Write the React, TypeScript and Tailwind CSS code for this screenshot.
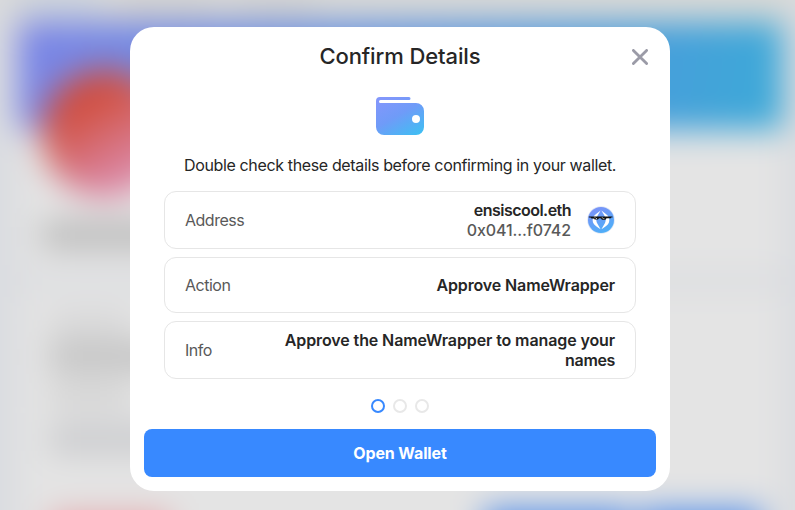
import type { ReactNode } from "react";

function ProfilePage() {
  return (
    <div
      aria-hidden="true"
      className="absolute -inset-12 flex flex-col bg-[#dadce0] p-12 blur-[16px]"
    >
      <div className="-mt-12 flex h-[70px] shrink-0 items-end gap-5 bg-[#d9d9d7] px-5 pb-[13px]">
        <div className="h-2 w-20 bg-[#a9c3ea]" />
        <div className="h-2 w-24 bg-[#c3c1c1]" />
        <div className="h-2 w-20 bg-[#c3c1c1]" />
      </div>
      <div className="ml-[18px] mr-[12px] h-[251px] shrink-0 bg-[#e4e4e4]">
        <div className="h-[108px] bg-linear-[100deg,#7b85e6_0%,#6b8ee0_35%,#4b9bdb_75%,#3caad8_100%]" />
        <div className="-mt-[60px] ml-[24px] size-[128px] rounded-full bg-linear-[150deg,#d04838_20%,#d2574c_35%,#d98099_70%,#e3a2c4_100%]" />
        <div className="mt-[25px] ml-6 h-6 w-44 bg-[#b5b5b5]" />
      </div>
      <div className="ml-[18px] mr-[12px] mt-4 flex h-[340px] shrink-0 flex-col bg-[#e4e4e4] pl-8">
        <div className="mt-7 h-4 w-20 bg-[#cfcfd0]" />
        <div className="mt-3 h-6 w-52 bg-[#bcbcbc]" />
        <div className="mt-4 h-5 w-20 bg-[#cfcfcf]" />
        <div className="mt-5 h-7 w-52 bg-[#c9cacd]" />
        <div className="mt-[57px] flex shrink-0 items-start">
          <div className="mt-1 h-24 w-[120px] shrink-0 bg-[#e5a9ac]" />
          <div className="ml-[314px] h-24 w-[148px] shrink-0 bg-[#4f8be8]" />
          <div className="ml-2 h-24 w-[122px] shrink-0 bg-[#4f8be8]" />
        </div>
      </div>
    </div>
  );
}

function CloseIcon() {
  return (
    <svg viewBox="0 0 16 16" className="size-4" fill="none" stroke="#9b9ba7" strokeWidth="2.8" strokeLinecap="round">
      <path d="M1.4 1.4 14.6 14.6M14.6 1.4 1.4 14.6" />
    </svg>
  );
}

function WalletIcon() {
  return (
    <svg viewBox="0 0 48 38" className="h-[38px] w-12">
      <defs>
        <linearGradient id="wallet" x1="10" y1="0" x2="34" y2="42" gradientUnits="userSpaceOnUse">
          <stop stopColor="#8297fb" />
          <stop offset="0.45" stopColor="#6f9bf8" />
          <stop offset="1" stopColor="#41bdf3" />
        </linearGradient>
      </defs>
      <path
        fill="url(#wallet)"
        fillRule="evenodd"
        d="M4 0H33a1.5 1.5 0 0 1 0 3H4.5a1.5 1.5 0 0 0 0 3H40a8 8 0 0 1 8 8V30a8 8 0 0 1-8 8H8a8 8 0 0 1-8-8V4a4 4 0 0 1 4-4ZM40 18a4 4 0 1 0 0 8a4 4 0 0 0 0-8Z"
      />
    </svg>
  );
}

function Avatar() {
  return (
    <svg viewBox="0 0 28 28" className="size-7">
      <defs>
        <linearGradient id="avatar" x1="8" y1="1" x2="20" y2="27" gradientUnits="userSpaceOnUse">
          <stop stopColor="#7b91f8" />
          <stop offset="1" stopColor="#4bb0f8" />
        </linearGradient>
      </defs>
      <circle cx="14" cy="14" r="13.8" fill="#dfe7f5" />
      <circle cx="14" cy="14" r="13" fill="url(#avatar)" />
      <path
        fill="#fff"
        d="M13.6 4.6C12 7.5 10.6 9.5 9.6 11.5C9.1 13.5 9.3 15.5 10 17L13.6 23.2C10.8 21.4 8.6 20 7 18.2C5.1 15.8 5.2 12.4 7.2 9.8C8.8 8.1 11 6.5 13.6 4.6ZM14.4 4.6C16 7.5 17.4 9.5 18.4 11.5C18.9 13.5 18.7 15.5 18 17L14.4 23.2C17.2 21.4 19.4 20 21 18.2C22.9 15.8 22.8 12.4 20.8 9.8C19.2 8.1 17 6.5 14.4 4.6Z"
      />
      <path
        fill="#111"
        d="M1.8 10.5H25.5V11.6H24V12.2H19.5L18.5 13.8H15L13.6 12.2H12L11 13.6H7.8L6.5 12.5H4.5L3.5 11.6H1.8Z"
      />
      <path fill="#fff" d="M7.5 11.5h1v.8h-1zM9 12.2h1v.7H9zM14.8 11.5h1v.8h-1zM16.3 12.2h1v.7h-1z" />
    </svg>
  );
}

function DetailRow({ label, size, children }: { label: string; size: string; children: ReactNode }) {
  return (
    <div className={`flex items-center justify-between rounded-xl border border-[#e6e6e6] px-5 ${size}`}>
      <span className="tracking-[-0.5px] text-[#595959]">{label}</span>
      <div className="flex items-center gap-4 text-right font-semibold text-[#262626]">{children}</div>
    </div>
  );
}

export default function App() {
  return (
    <div className="relative flex h-[510px] w-[795px] justify-center overflow-hidden font-['Inter','Liberation_Sans',sans-serif] text-base leading-5">
      <ProfilePage />
      <div
        role="dialog"
        className="relative mt-[27px] ml-[5px] flex h-[464px] w-[540px] flex-col rounded-3xl bg-white px-3.5"
      >
        <header className="flex h-[60px] items-center justify-between px-2">
          <span className="w-4" />
          <h1 className="pb-0.5 text-[22px] font-medium tracking-[-0.1px] text-[#262626]">Confirm Details</h1>
          <button aria-label="Close">
            <CloseIcon />
          </button>
        </header>
        <div className="mt-2.5 flex justify-center">
          <WalletIcon />
        </div>
        <p className="mt-5 text-center tracking-[-0.36px] whitespace-nowrap text-[#262626]">
          Double check these details before confirming in your wallet.
        </p>
        <div className="mt-4 flex flex-col gap-2 px-5">
          <DetailRow size="h-[58px]" label="Address">
            <div>
              <div className="tracking-[-0.53px]">ensiscool.eth</div>
              <div className="font-medium tracking-[-0.1px] text-[#595959]">0x041...f0742</div>
            </div>
            <Avatar />
          </DetailRow>
          <DetailRow size="h-14" label="Action">
            <span className="tracking-[-0.13px]">Approve NameWrapper</span>
          </DetailRow>
          <DetailRow size="h-[58px]" label="Info">
            <span className="w-[340px] tracking-[-0.11px]">
              Approve the NameWrapper to manage your
              <br />
              <span className="tracking-[-0.35px]">names</span>
            </span>
          </DetailRow>
        </div>
        <div className="mt-5 flex justify-center gap-2">
          <span className="size-3.5 rounded-full border-2 border-[#3889ff]" />
          <span className="size-3.5 rounded-full border-2 border-[#e8e8e8]" />
          <span className="size-3.5 rounded-full border-2 border-[#e8e8e8]" />
        </div>
        <button className="mt-4 h-12 rounded-lg bg-[#3889ff] font-bold tracking-[-0.1px] text-white">
          Open Wallet
        </button>
      </div>
    </div>
  );
}
